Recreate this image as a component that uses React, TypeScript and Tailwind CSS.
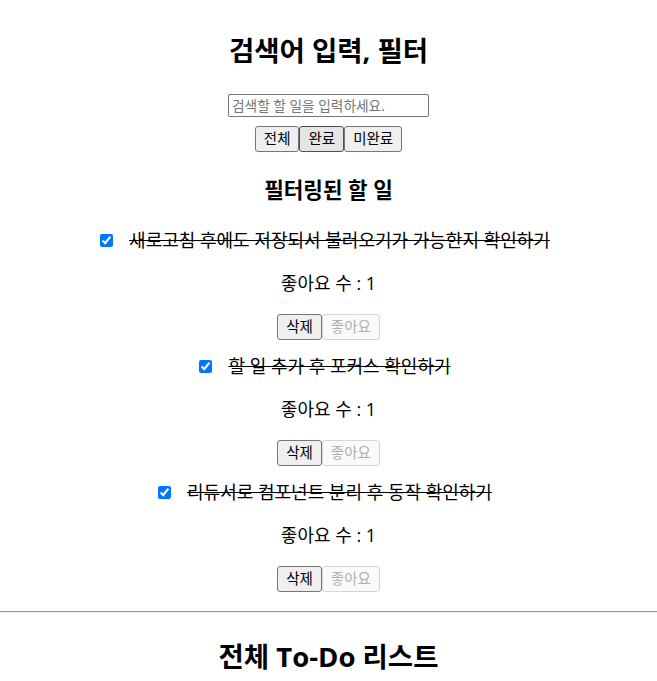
import { useState } from 'react'

type Todo = {
    id: number
    text: string
    done: boolean
    likes: number
}

const initialTodos: Todo[] = [
    { id: 1, text: '새로고침 후에도 저장되서 불러오기가 가능한지 확인하기', done: true, likes: 1 },
    { id: 2, text: '할 일 추가 후 포커스 확인하기', done: true, likes: 1 },
    { id: 3, text: '리듀서로 컴포넌트 분리 후 동작 확인하기', done: true, likes: 1 },
]

const font = "font-['Open_Sans','Noto_Sans_CJK_KR',sans-serif]"

const btn = 'h-[26px] px-[8px] text-[14.5px] leading-none border rounded-[3px]'
const btnNormal = `${btn} bg-[#efefef] border-[#767676] text-black`
const btnActive = `${btn} bg-[#e5e5e5] border-[#4f4f4f] text-black`
const btnDisabled = `${btn} bg-[#fafafa] border-[#d6d6d6] text-[#b0b0b0]`

export default function App() {
    const [todos, setTodos] = useState<Todo[]>(initialTodos)
    const [query, setQuery] = useState('')
    const [filter, setFilter] = useState<'all' | 'done' | 'todo'>('done')

    const filtered = todos
        .filter(t => t.text.includes(query))
        .filter(t => (filter === 'all' ? true : filter === 'done' ? t.done : !t.done))

    const toggle = (id: number) =>
        setTodos(todos.map(t => (t.id === id ? { ...t, done: !t.done } : t)))
    const remove = (id: number) => setTodos(todos.filter(t => t.id !== id))
    const like = (id: number) =>
        setTodos(todos.map(t => (t.id === id ? { ...t, likes: t.likes + 1 } : t)))

    return (
        <div className={`${font} min-h-screen bg-white text-black flex flex-col items-center`}>
            {/* 검색 + 필터 */}
            <h1 className="mt-[33px] h-[36px] leading-[36px] text-[27.5px] font-bold">검색어 입력, 필터</h1>

            <input
                value={query}
                onChange={e => setQuery(e.target.value)}
                placeholder="검색할 할 일을 입력하세요."
                className="mt-[25px] w-[201px] h-[23px] px-[3px] text-[13.7px] border border-[#767676] rounded-[2px] outline-none placeholder:text-[#757575]"
            />

            <div className="mt-[9px] flex">
                <button onClick={() => setFilter('all')} className={filter === 'all' ? btnActive : btnNormal}>전체</button>
                <button onClick={() => setFilter('done')} className={filter === 'done' ? btnActive : btnNormal}>완료</button>
                <button onClick={() => setFilter('todo')} className={filter === 'todo' ? btnActive : btnNormal}>미완료</button>
            </div>

            <h2 className="mt-[26px] h-[24px] leading-[24px] text-[21.3px] font-bold">필터링된 할 일</h2>

            {/* 할 일 목록 */}
            <div className="mt-[26px] flex flex-col items-center gap-[14px]">
                {filtered.map(todo => (
                    <div key={todo.id} className="flex flex-col items-center">
                        <div className="h-[24px] flex items-center">
                            <input
                                type="checkbox"
                                checked={todo.done}
                                onChange={() => toggle(todo.id)}
                                className="ml-[4px] mr-[3px] w-[13px] h-[13px] accent-[#0075ff]"
                            />
                            <span className={`ml-[13px] mr-[11px] text-[18px] leading-[24px] ${todo.done ? 'line-through' : ''}`}>
                                {todo.text}
                            </span>
                        </div>
                        <p className="mt-[19px] h-[24px] leading-[24px] text-[18px]">좋아요 수 : {todo.likes}</p>
                        <div className="mt-[19px] flex">
                            <button onClick={() => remove(todo.id)} className={btnNormal}>삭제</button>
                            <button onClick={() => like(todo.id)} disabled={todo.likes > 0} className={btnDisabled}>좋아요</button>
                        </div>
                    </div>
                ))}
            </div>

            <hr className="mt-[19px] w-full h-0 border-0 border-t border-b border-t-[#9a9a9a] border-b-[#eeeeee]" />

            <h1 className="mt-[26px] h-[36px] leading-[36px] text-[27.5px] font-bold">전체 To-Do 리스트</h1>
        </div>
    )
}
